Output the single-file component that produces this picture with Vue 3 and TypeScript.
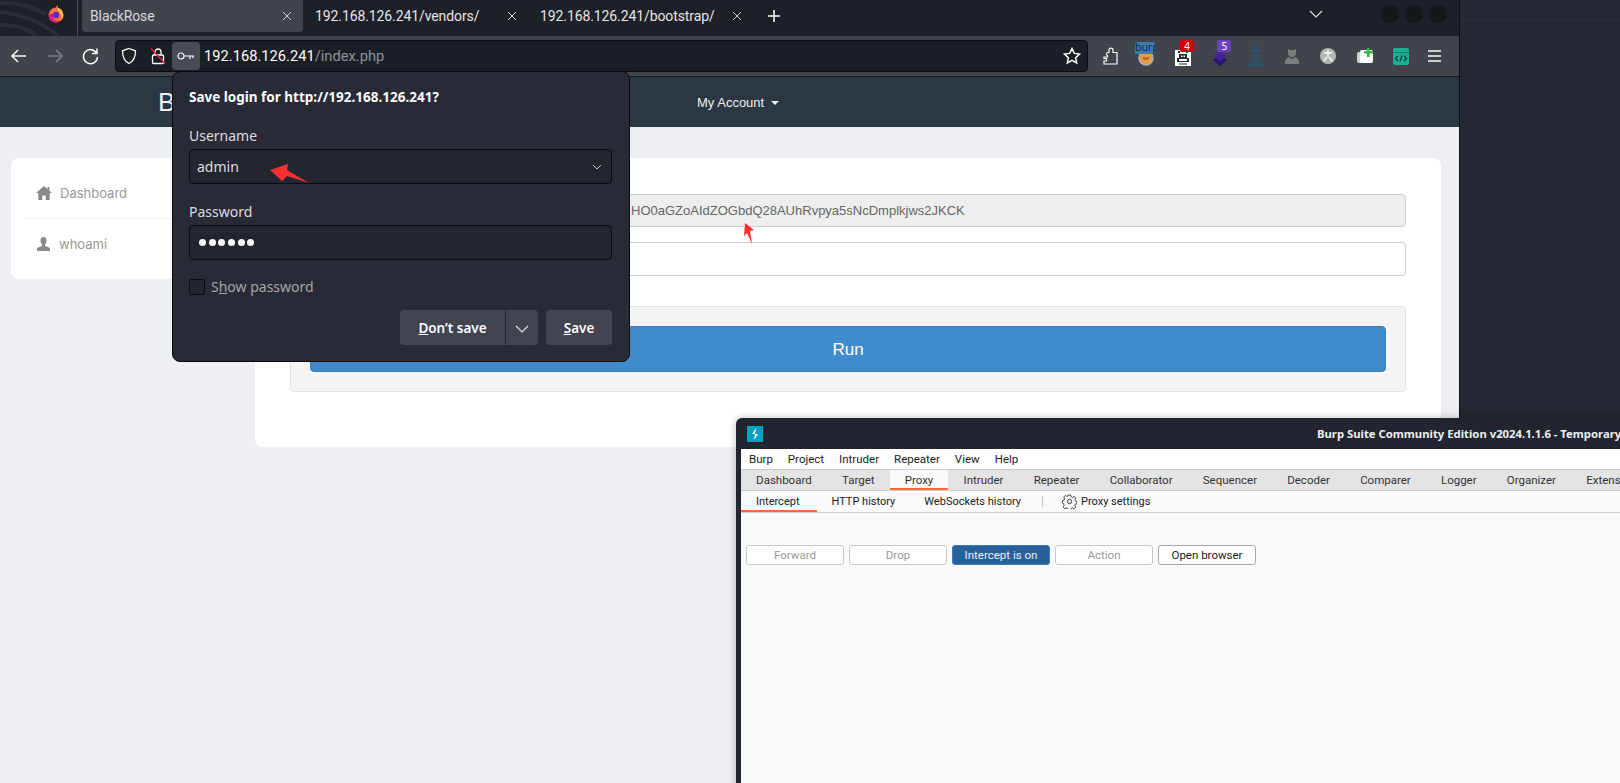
<script setup lang="ts">
interface BurpTab {
  label: string
  active?: boolean
}

const otherTabs = ['192.168.126.241/vendors/', '192.168.126.241/bootstrap/']

const burpMenu = ['Burp', 'Project', 'Intruder', 'Repeater', 'View', 'Help']

const burpTabs: BurpTab[] = [
  { label: 'Dashboard' },
  { label: 'Target' },
  { label: 'Proxy', active: true },
  { label: 'Intruder' },
  { label: 'Repeater' },
  { label: 'Collaborator' },
  { label: 'Sequencer' },
  { label: 'Decoder' },
  { label: 'Comparer' },
  { label: 'Logger' },
  { label: 'Organizer' },
  { label: 'Extensions' },
]

const proxyTabs: BurpTab[] = [
  { label: 'Intercept', active: true },
  { label: 'HTTP history' },
  { label: 'WebSockets history' },
]

const proxyButtons = [
  { label: 'Forward', kind: 'off' },
  { label: 'Drop', kind: 'off' },
  { label: 'Intercept is on', kind: 'on' },
  { label: 'Action', kind: 'off' },
  { label: 'Open browser', kind: 'plain' },
]
</script>

<template>
  <div class="desktop">
    <div class="browser">
      <div class="tabbar">
        <div class="tabbar__logo">
          <svg class="wallpaper" width="78" height="36" viewBox="0 0 78 36">
            <path d="M0 12 C 20 14 42 22 58 36" />
            <path d="M0 25 C 14 25 28 28 36 36" />
            <path d="M0 3 C 16 2 30 6 46 14" />
          </svg>
          <svg class="firefox" width="16" height="18" viewBox="0 0 16 18">
            <circle cx="8" cy="10" r="7.4" fill="#ff7139" />
            <path d="M8 2.6a7.4 7.4 0 0 1 7.4 7.4c0 2-.8 3.6-2 5 .6-3-.2-6-2.600-8C10 5.700 9 4 10 .6 8.800 1.200 8 2 8 2.600z" fill="#ffbd4f" />
            <path d="M.6 10c0 4 3.300 7.400 7.400 7.400 2 0 3.700-.8 5-2-2 1-5 1-7-1C4.800 13 4.500 11 5 9 3 9 1.800 9 .6 10z" fill="#e31587" />
            <circle cx="8" cy="10" r="3.200" fill="#592acb" />
          </svg>
        </div>
        <div class="tab tab--active">
          <span class="tab__title">BlackRose</span>
          <svg class="tab__close" width="10" height="10" viewBox="0 0 10 10">
            <path d="M1 1l8 8M9 1l-8 8" />
          </svg>
        </div>
        <div v-for="tab in otherTabs" :key="tab" class="tab">
          <span class="tab__title">{{ tab }}</span>
          <svg class="tab__close" width="10" height="10" viewBox="0 0 10 10">
            <path d="M1 1l8 8M9 1l-8 8" />
          </svg>
        </div>
        <svg class="tabbar__plus" width="14" height="14" viewBox="0 0 14 14">
          <path d="M7 1v12M1 7h12" />
        </svg>
        <svg class="tabbar__chevron" width="14" height="8" viewBox="0 0 14 8">
          <path d="M1 1l6 6 6-6" />
        </svg>
        <div class="winbtns">
          <span></span>
          <span></span>
          <span></span>
        </div>
      </div>

      <div class="toolbar">
        <div class="nav">
          <svg width="18" height="16" viewBox="0 0 18 16">
            <path d="M16 8H2M8 2L2 8l6 6" />
          </svg>
          <svg class="nav__off" width="18" height="16" viewBox="0 0 18 16">
            <path d="M2 8h14M10 2l6 6-6 6" />
          </svg>
          <svg width="18" height="18" viewBox="0 0 18 18">
            <path d="M14.500 6a7 7 0 1 0 1 4M15 1.500v5h-5" />
          </svg>
        </div>
        <div class="urlbar">
          <svg class="urlbar__icon urlbar__shield" width="16" height="18" viewBox="0 0 16 18">
            <path d="M8 1.500l6.500 2.300c0 6-1.500 10.500-6.500 12.700C3 14.300 1.500 9.800 1.500 3.800z" />
          </svg>
          <svg class="urlbar__icon urlbar__lock" width="16" height="18" viewBox="0 0 16 18">
            <rect x="2.500" y="8" width="11" height="8.500" rx="1" />
            <path d="M5 8V5a3 3 0 0 1 6 0v3" />
            <path class="urlbar__slash" d="M1 1.500l14 15" />
          </svg>
          <div class="urlbar__key">
            <svg width="18" height="10" viewBox="0 0 18 10">
              <circle cx="4" cy="5" r="3" />
              <path d="M7 5h10M13 5v3M16 5v2" />
            </svg>
          </div>
          <div class="urlbar__text">192.168.126.241<span>/index.php</span></div>
          <svg class="urlbar__star" width="18" height="18" viewBox="0 0 18 18">
            <path d="M9 1.500l2.300 4.900 5.300.7-3.900 3.600 1 5.300L9 13.400l-4.700 2.600 1-5.300L1.400 7.100l5.300-.7z" />
          </svg>
        </div>
        <div class="addons">
          <svg class="addon addon--puzzle" width="15" height="18" viewBox="0 0 15 18">
            <path d="M1 10h3.500V8.500C3 8 3 5.500 5 5.500h1V3c0-2.500 4-2.500 4 0v2.500h4v11.500H1v-3h2.500v-2.500H1z" />
          </svg>
          <div class="addon addon--burp">
            <svg width="16" height="16" viewBox="0 0 16 16">
              <circle cx="8" cy="8" r="7" fill="#e69a4c" stroke="#b0b0b0" />
              <path d="M4 7h8l-2 3H6z" fill="#c56a22" />
            </svg>
            <span>burp</span>
          </div>
          <div class="addon addon--wap">
            <svg width="16" height="16" viewBox="0 0 16 16">
              <rect width="16" height="16" fill="#fff" />
              <path d="M3 1h2v2H3zM11 1h2v2h-2zM4 4h8v5H4zM2 8h2v3h8V8h2v4H2zM4 13.500h8v1H4z" fill="#2a2a2a" />
              <path d="M6 5.500h1.500V7H6zM8.500 5.500H10V7H8.500z" fill="#fff" />
            </svg>
            <span>4</span>
          </div>
          <div class="addon addon--stack">
            <svg width="16" height="16" viewBox="0 0 16 16">
              <path d="M8 5l7 5-7 6-7-6z" fill="#2a1470" />
              <path d="M8 1l7 5-7 5.500L1 6z" fill="#45209f" />
            </svg>
            <span>5</span>
          </div>
          <svg class="addon" width="16" height="20" viewBox="0 0 16 20">
            <path d="M3 5h10M5 5l1-4h4l1 4M5 7c0 4 6 4 6 0M2 19v-3l3-3h6l3 3v3zM8 13v6" fill="none" stroke="#1f5a7a" stroke-width="1.500" />
          </svg>
          <svg class="addon" width="16" height="18" viewBox="0 0 16 18">
            <path d="M4 2l2 1h4l2-1v4a4 4 0 0 1-8 0zM1 17v-3l3-4 4 2 4-2 3 4v3z" fill="#7d7d7d" />
          </svg>
          <svg class="addon" width="18" height="18" viewBox="0 0 18 18">
            <circle cx="9" cy="9" r="8" fill="#b5b5b5" />
            <path d="M5 6h8M9 3v7M5 14l3-4M13 14l-3-4" stroke="#fff" stroke-width="1.300" fill="none" />
          </svg>
          <svg class="addon" width="18" height="18" viewBox="0 0 18 18">
            <rect x="1" y="5" width="12" height="11" rx="2" fill="#cfcfcf" />
            <rect x="4" y="3" width="13" height="13" rx="2" fill="#fff" />
            <path d="M11 1h2.500v3H17v2.500h-3.500V10H11V6.500H8V4h3z" fill="#39b54a" />
          </svg>
          <svg class="addon" width="16" height="17" viewBox="0 0 16 17">
            <rect width="16" height="17" rx="2" fill="#1fae93" />
            <rect y="4" width="16" height=".8" fill="#0f6d5c" />
            <path d="M5 8l-2.500 2.500L5 13M11 8l2.500 2.500L11 13M9 7.500l-2 6" fill="none" stroke="#0b3b33" stroke-width="1.100" />
          </svg>
          <svg class="addon addon--menu" width="13" height="12" viewBox="0 0 13 12">
            <path d="M0 1h13M0 6h13M0 11h13" />
          </svg>
        </div>
      </div>

      <div class="siteheader">
        <span class="siteheader__brand">BlackRose</span>
        <span class="siteheader__account">My Account <i></i></span>
      </div>

      <div class="page">
        <aside class="sidebar">
          <div class="sidebar__item sidebar__item--line">
            <svg width="16" height="14" viewBox="0 0 16 14">
              <path d="M8 0L0 7h2.300v7h4V9.500h3.400V14h4V7H16l-2.500-2.200V1h-2v2z" />
            </svg>
            Dashboard
          </div>
          <div class="sidebar__item">
            <svg width="15" height="14" viewBox="0 0 15 14">
              <path d="M7.500 0C5.500 0 4.500 1.500 4.500 3.500c0 2 1 3.500 1.500 4.200v1L1 11v3h13v-3L9 8.700v-1c.5-.7 1.500-2.200 1.500-4.200C10.500 1.500 9.500 0 7.500 0z" />
            </svg>
            whoami
          </div>
        </aside>
        <main class="card">
          <div class="field field--readonly">HO0aGZoAIdZOGbdQ28AUhRvpya5sNcDmplkjws2JKCK</div>
          <div class="field"></div>
          <div class="well">
            <button class="run">Run</button>
          </div>
        </main>
      </div>
    </div>

    <div class="sidepanel"></div>

    <div class="popup">
      <div class="popup__title">Save login for http://192.168.126.241?</div>
      <label class="popup__label">Username</label>
      <div class="popup__input">
        admin
        <svg width="10" height="6" viewBox="0 0 10 6">
          <path d="M1 1l4 4 4-4" />
        </svg>
      </div>
      <label class="popup__label popup__label--second">Password</label>
      <div class="popup__input popup__input--dots">
        <i v-for="n in 6" :key="n"></i>
      </div>
      <div class="popup__check">
        <span class="popup__box"></span>
        <span>S<u>h</u>ow password</span>
      </div>
      <div class="popup__actions">
        <div class="popup__split">
          <button class="popup__btn popup__btn--main"><u>D</u>on’t save</button>
          <button class="popup__btn popup__btn--more">
            <svg width="14" height="8" viewBox="0 0 14 8">
              <path d="M1 1l6 6 6-6" />
            </svg>
          </button>
        </div>
        <button class="popup__btn popup__btn--save"><u>S</u>ave</button>
      </div>
    </div>

    <svg class="arrow arrow--user" width="40" height="20" viewBox="0 0 40 20">
      <path d="M0 6L18 0l-1 6 22 13-22-7-5 5z" />
    </svg>
    <svg class="arrow arrow--token" width="12" height="22" viewBox="0 0 12 22">
      <path d="M2 0l9 7-4 1 2 13-5-11-3 3z" />
    </svg>

    <div class="burp">
      <div class="burp__titlebar">
        <svg width="16" height="16" viewBox="0 0 16 16">
          <rect width="16" height="16" fill="#00a2bd" />
          <path d="M9 2L5 8h3l-1 6 4-6H8z" fill="#fff" />
        </svg>
        <span class="burp__title">Burp Suite Community Edition v2024.1.1.6 - Temporary Project</span>
      </div>
      <div class="burp__body">
        <div class="burp__menu">
          <span v-for="item in burpMenu" :key="item">{{ item }}</span>
        </div>
        <div class="burp__tabs">
          <span
            v-for="tab in burpTabs"
            :key="tab.label"
            class="burp__tab"
            :class="{ 'burp__tab--active': tab.active }"
          >{{ tab.label }}</span>
        </div>
        <div class="burp__subtabs">
          <span
            v-for="tab in proxyTabs"
            :key="tab.label"
            class="burp__subtab"
            :class="{ 'burp__subtab--active': tab.active }"
          >{{ tab.label }}</span>
          <i class="burp__sep"></i>
          <svg class="burp__gear" width="15" height="15" viewBox="0 0 15 15">
            <circle cx="7.500" cy="7.500" r="2.200" />
            <path d="M6.300 1h2.400l.4 1.800 1.400.6 1.600-1 1.700 1.700-1 1.600.6 1.400 1.600.4v2.200l-1.600.4-.6 1.400 1 1.600-1.700 1.700-1.600-1-1.400.6-.4 1.600H6.300l-.4-1.600-1.400-.6-1.600 1-1.700-1.700 1-1.600-.6-1.400L.5 8.700V6.500l1.600-.4.6-1.400-1-1.600 1.700-1.700 1.600 1 1.400-.6z" />
          </svg>
          <span class="burp__settings">Proxy settings</span>
        </div>
        <div class="burp__buttons">
          <button
            v-for="btn in proxyButtons"
            :key="btn.label"
            class="burp__btn"
            :class="`burp__btn--${btn.kind}`"
          >{{ btn.label }}</button>
        </div>
      </div>
    </div>
  </div>
</template>

<style>
html,
body {
  margin: 0;
  overflow: hidden;
}
</style>

<style scoped>
.desktop {
  position: relative;
  display: flex;
  width: 1620px;
  height: 783px;
  overflow: hidden;
  background: #232832;
  font-family: 'Noto Sans', sans-serif;
}

.browser {
  display: flex;
  flex-direction: column;
  width: 1459px;
  border-right: 1px solid #101216;
}

.sidepanel {
  flex: 1;
  height: 20px;
  border-bottom: 1px solid #2c313c;
}

/* tab strip */
.tabbar {
  display: flex;
  align-items: flex-start;
  height: 36px;
  background: #1e2028;
  color: #fbfbfe;
}

.tabbar__logo {
  position: relative;
  display: flex;
  justify-content: center;
  box-sizing: border-box;
  width: 78px;
  height: 36px;
  padding-top: 5px;
  border-right: 1px solid #4a4c53;
  margin-right: 4px;
}

.wallpaper {
  position: absolute;
  top: 0;
  left: 0;
  fill: none;
  stroke: #2b2d35;
  stroke-width: 4;
}

.firefox {
  position: relative;
  margin-left: 34px;
}

.tab {
  display: flex;
  align-items: center;
  justify-content: space-between;
  box-sizing: border-box;
  width: 225px;
  height: 32px;
  padding: 0 11px 0 12px;
  font-family: 'Roboto', sans-serif;
  font-size: 14px;
  letter-spacing: -0.1px;
  color: #e4e4e8;
}

.tab--active {
  width: 221px;
  padding-left: 8px;
  background: #42444c;
  border-radius: 0 0 4px 4px;
  color: #d8d8dc;
}

.tab__close {
  fill: none;
  stroke: #d0d0d4;
  stroke-width: 1;
}

.tabbar__plus {
  flex-shrink: 0;
  margin: 9px 0 0 14px;
  fill: none;
  stroke: #fbfbfe;
  stroke-width: 1.500;
}

.tabbar__chevron {
  margin: 10px 0 0 auto;
  fill: none;
  stroke: #e0e0e4;
  stroke-width: 1.200;
}

.winbtns {
  display: flex;
  gap: 6px;
  margin: 5px 12px 0 58px;
}

.winbtns span {
  width: 18px;
  height: 18px;
  border-radius: 50%;
  background: #14161c;
}

/* toolbar */
.toolbar {
  display: flex;
  align-items: center;
  box-sizing: border-box;
  height: 41px;
  padding: 0 18px 0 10px;
  background: #42444c;
  border-bottom: 1px solid #16181d;
  fill: none;
  stroke: #fbfbfe;
  stroke-width: 1.500;
}

.nav {
  display: flex;
  align-items: center;
  gap: 18px;
  width: 105px;
}

.nav__off {
  stroke: #7b7d83;
}

.urlbar {
  display: flex;
  align-items: center;
  box-sizing: border-box;
  width: 973px;
  height: 32px;
  padding: 0 6px 0 2px;
  background: #1c1e26;
  border: 1px solid #0c0d11;
  border-radius: 4px;
}

.urlbar__icon {
  stroke-width: 1.300;
}

.urlbar__shield {
  margin: 0 7px 0 3px;
}

.urlbar__lock {
  margin: 0 6px 0 6px;
}

.urlbar__slash {
  stroke: #e22850;
}

.urlbar__key {
  display: flex;
  align-items: center;
  justify-content: center;
  width: 28px;
  height: 28px;
  border-radius: 4px;
  background: #4a4c54;
  stroke-width: 1.200;
}

.urlbar__text {
  flex: 1;
  margin-left: 4px;
  font-family: 'Roboto', sans-serif;
  font-size: 14.700px;
  color: #fbfbfe;
  stroke: none;
}

.urlbar__text span {
  color: #8f9096;
}

.addons {
  display: flex;
  flex: 1;
  align-items: center;
  justify-content: space-between;
  padding-left: 15px;
}

.addon {
  position: relative;
  stroke: none;
}

.addon--puzzle {
  fill: none;
  stroke: #fbfbfe;
  stroke-width: 1.200;
}

.addon--burp,
.addon--wap,
.addon--stack {
  width: 18px;
  height: 20px;
  display: flex;
  justify-content: center;
  align-items: flex-end;
}

.addon--burp span {
  position: absolute;
  top: -4px;
  left: -2px;
  width: 20px;
  height: 12px;
  overflow: hidden;
  background: #3f7cae;
  border-radius: 2px 2px 0 0;
  font-size: 10.500px;
  line-height: 11px;
  color: #10263a;
}

.addon--wap span,
.addon--stack span {
  position: absolute;
  top: -6px;
  left: 6px;
  width: 14px;
  height: 12px;
  border-radius: 2px;
  text-align: center;
  font-size: 10px;
  line-height: 12px;
  color: #fff;
}

.addon--wap span {
  background: #d70000;
}

.addon--stack span {
  background: #6a3fc0;
}

.addon--menu {
  stroke: #fbfbfe;
  stroke-width: 1.500;
}

/* the site behind the popup */
.siteheader {
  position: relative;
  display: flex;
  align-items: center;
  flex-shrink: 0;
  height: 50px;
  padding-left: 158px;
  background: #2b3743;
  color: #eef0f2;
  font-family: 'Liberation Sans', sans-serif;
}

.siteheader__brand {
  font-size: 26px;
  width: 539px;
}

.siteheader__account {
  font-size: 13px;
}

.siteheader__account i {
  display: inline-block;
  margin-left: 3px;
  vertical-align: middle;
  border: 4px solid transparent;
  border-top-color: #eef0f2;
  border-bottom: 0;
}

.page {
  display: flex;
  align-items: flex-start;
  flex: 1;
  gap: 14px;
  padding: 31px 18px 0 11px;
  background: #eeeff3;
  font-family: 'Inter', 'Liberation Sans', sans-serif;
}

.sidebar {
  box-sizing: border-box;
  width: 230px;
  height: 121px;
  padding: 10px 14px;
  background: #fff;
  border-radius: 8px;
}

.sidebar__item {
  display: flex;
  align-items: center;
  gap: 8px;
  height: 50px;
  padding-left: 11px;
  font-size: 13px;
  color: #999;
}

.sidebar__item svg {
  fill: #8a8a8a;
}

.sidebar__item--line {
  border-bottom: 1px dotted #e2e2e2;
}

.card {
  box-sizing: border-box;
  flex: 1;
  height: 289px;
  padding: 36px 35px 0;
  background: #fff;
  border-radius: 8px;
}

.field {
  box-sizing: border-box;
  height: 33px;
  margin-bottom: 15px;
  padding-left: 340px;
  border: 1px solid #ccc;
  border-radius: 4px;
  background: #fff;
  font-family: 'Liberation Sans', sans-serif;
  font-size: 13px;
  line-height: 31px;
  color: #666;
}

.field--readonly {
  background: #eee;
}

.field + .field {
  height: 34px;
  margin-bottom: 30px;
}

.well {
  box-sizing: border-box;
  height: 86px;
  padding: 19px;
  background: #f5f5f5;
  border: 1px solid #e3e3e3;
  border-radius: 4px;
}

.run {
  display: block;
  width: 100%;
  height: 46px;
  padding: 2px 0 0;
  border: 1px solid #357ebd;
  border-radius: 4px;
  background: #428bca;
  color: #fff;
  font-family: 'Liberation Sans', sans-serif;
  font-size: 17px;
}

/* save login popup */
.popup {
  position: absolute;
  top: 71px;
  left: 172px;
  box-sizing: border-box;
  width: 458px;
  height: 291px;
  padding: 0 17px 0 16px;
  background: #282a36;
  border: 1px solid #0b0c10;
  border-radius: 8px;
  color: #fbfbfe;
  font-size: 14px;
}

.popup__title {
  margin-top: 15px;
  font-weight: 700;
  font-size: 13.500px;
  line-height: 20px;
}

.popup__label {
  display: block;
  margin-top: 19px;
  height: 20px;
  line-height: 20px;
  color: #dcdce0;
}

.popup__label--second {
  margin-top: 18px;
}

.popup__input {
  display: flex;
  align-items: center;
  justify-content: space-between;
  box-sizing: border-box;
  height: 35px;
  margin-top: 3px;
  padding: 0 9px 0 7px;
  background: #23252f;
  border: 1px solid #0b0c10;
  border-radius: 4px;
  color: #dcdce0;
}

.popup__input svg {
  fill: none;
  stroke: #c8c8cc;
}

.popup__input--dots {
  justify-content: flex-start;
  gap: 2.700px;
  padding-left: 9px;
}

.popup__input--dots i {
  width: 7px;
  height: 7px;
  border-radius: 50%;
  background: #fbfbfe;
}

.popup__check {
  display: flex;
  align-items: center;
  gap: 6px;
  margin-top: 17px;
  color: #a4a5ab;
}

.popup__box {
  box-sizing: border-box;
  width: 16px;
  height: 16px;
  border: 1px solid #0b0c10;
  border-radius: 2px;
  background: #23252e;
}

.popup__actions {
  display: flex;
  justify-content: flex-end;
  gap: 8px;
  margin-top: 14px;
}

.popup__split {
  display: flex;
  gap: 1px;
}

.popup__btn {
  height: 35px;
  padding: 0;
  border: 0;
  background: #42444f;
  color: #fbfbfe;
  font-family: 'Noto Sans', sans-serif;
  font-size: 13.500px;
  font-weight: 600;
}

.popup__btn--main {
  width: 105px;
  border-radius: 4px 0 0 4px;
}

.popup__btn--more {
  width: 32px;
  border-radius: 0 4px 4px 0;
}

.popup__btn--more svg {
  fill: none;
  stroke: #e0e0e4;
  stroke-width: 1.200;
}

.popup__btn--save {
  width: 66px;
  border-radius: 4px;
}

.arrow {
  position: absolute;
  fill: #f83030;
}

.arrow--user {
  top: 164px;
  left: 270px;
}

.arrow--token {
  top: 223px;
  left: 743px;
}

/* burp window */
.burp {
  position: absolute;
  top: 418px;
  left: 736px;
  width: 900px;
  height: 380px;
  background: #22252f;
  border-radius: 6px 0 0 0;
  box-shadow: 0 0 8px rgba(0, 0, 0, 0.25);
  padding-left: 5px;
  box-sizing: border-box;
}

.burp__titlebar {
  display: flex;
  align-items: center;
  height: 31px;
  margin-left: 6px;
  box-sizing: border-box;
}

.burp__titlebar svg {
  flex-shrink: 0;
}

.burp__title {
  margin-left: 554px;
  white-space: nowrap;
  font-size: 11.300px;
  font-weight: 700;
  color: #eceff3;
}

.burp__body {
  height: 349px;
  background: #fafafa;
  font-family: 'Roboto', sans-serif;
  font-size: 11.500px;
  color: #222;
}

.burp__menu {
  display: flex;
  gap: 15px;
  align-items: center;
  box-sizing: border-box;
  height: 20px;
  padding-left: 8px;
  background: #fff;
}

.burp__tabs {
  display: flex;
  box-sizing: border-box;
  height: 22px;
  background: #e4e4e4;
  border-top: 1px solid #cdcdcd;
  border-bottom: 1px solid #cdcdcd;
}

.burp__tab {
  display: flex;
  align-items: center;
  padding: 0 15.100px;
  white-space: nowrap;
  color: #333;
}

.burp__tab--active {
  background: #fafafa;
  box-shadow: inset 0 -2px 0 #ff6633;
}

.burp__subtabs {
  display: flex;
  align-items: center;
  box-sizing: border-box;
  height: 22px;
  border-bottom: 1px solid #cdcdcd;
  font-size: 11px;
}

.burp__subtab {
  display: flex;
  align-items: center;
  height: 100%;
  padding: 0 14px 0 15px;
  white-space: nowrap;
}

.burp__subtab--active {
  padding-right: 17px;
  box-shadow: inset 0 -2px 0 #ff6633;
}

.burp__sep {
  width: 1px;
  height: 11px;
  margin: 0 19px 0 7px;
  background: #c4c4c4;
}

.burp__gear {
  fill: none;
  stroke: #444;
  margin-right: 4px;
}

.burp__buttons {
  display: flex;
  gap: 5px;
  padding: 32px 0 0 5px;
}

.burp__btn {
  width: 98px;
  height: 20px;
  padding: 0;
  border: 1px solid #c8c8c8;
  border-radius: 3px;
  background: #fff;
  font-family: 'Roboto', sans-serif;
  font-size: 11.500px;
}

.burp__btn--off {
  color: #9a9a9a;
}

.burp__btn--on {
  background: #26619c;
  border-color: #3f79b0;
  color: #e8eef5;
}

.burp__btn--plain {
  border-color: #a8a8a8;
  color: #222;
}
</style>
